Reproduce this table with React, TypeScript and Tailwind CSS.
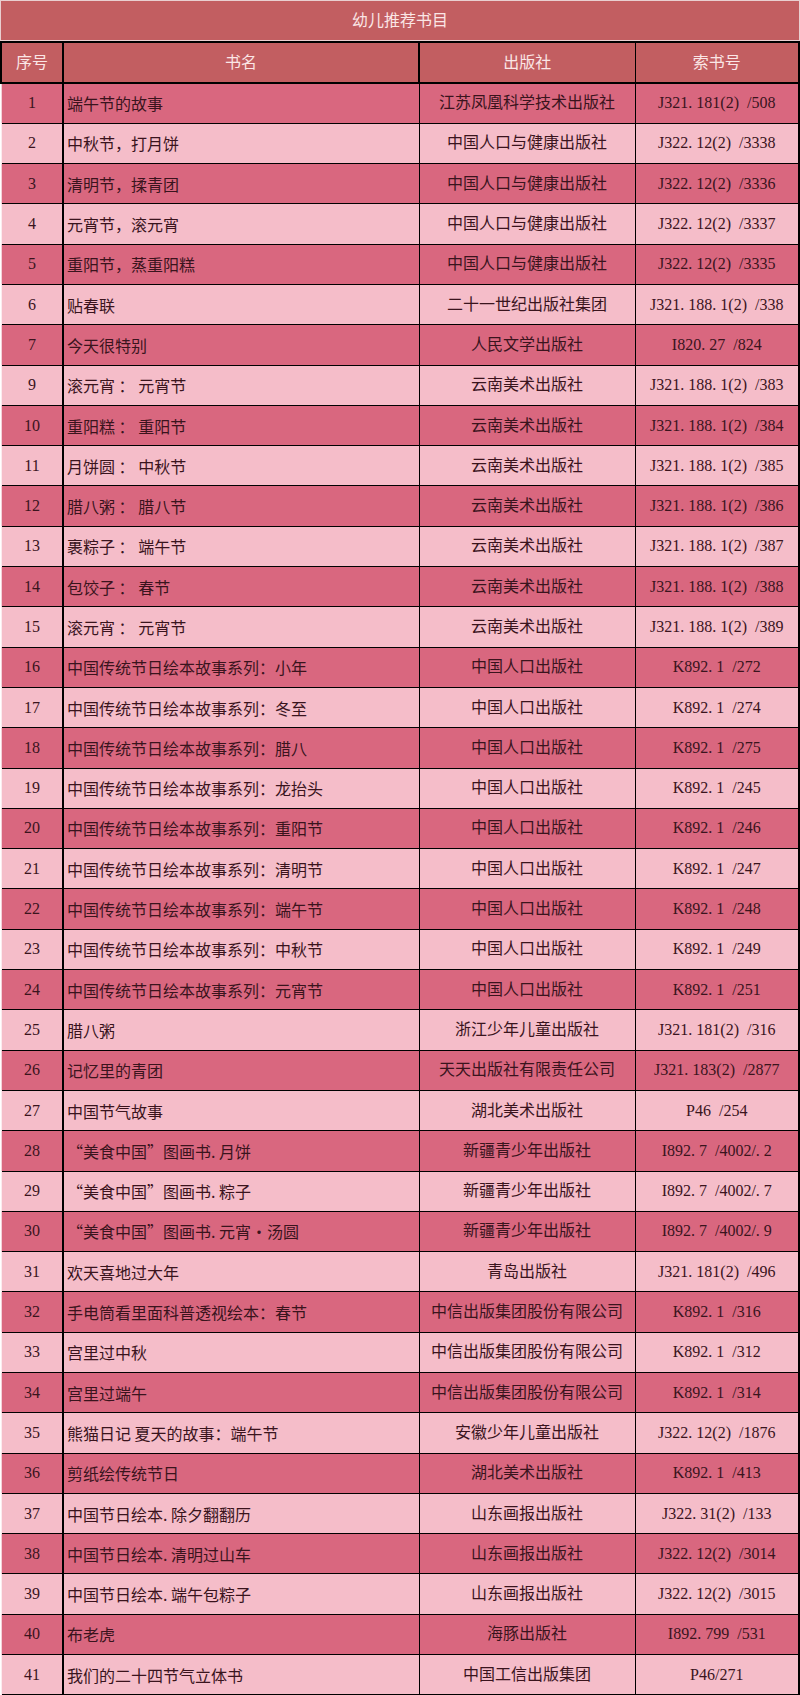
import React from 'react';

type Book = { no: string; name: string; press: string; code: string };

const BOOKS: Book[] = [
    { no: '1', name: '端午节的故事', press: '江苏凤凰科学技术出版社', code: 'J321.181(2) /508' },
    { no: '2', name: '中秋节，打月饼', press: '中国人口与健康出版社', code: 'J322.12(2) /3338' },
    { no: '3', name: '清明节，揉青团', press: '中国人口与健康出版社', code: 'J322.12(2) /3336' },
    { no: '4', name: '元宵节，滚元宵', press: '中国人口与健康出版社', code: 'J322.12(2) /3337' },
    { no: '5', name: '重阳节，蒸重阳糕', press: '中国人口与健康出版社', code: 'J322.12(2) /3335' },
    { no: '6', name: '贴春联', press: '二十一世纪出版社集团', code: 'J321.188.1(2) /338' },
    { no: '7', name: '今天很特别', press: '人民文学出版社', code: 'I820.27 /824' },
    { no: '9', name: '滚元宵 ： 元宵节', press: '云南美术出版社', code: 'J321.188.1(2) /383' },
    { no: '10', name: '重阳糕 ： 重阳节', press: '云南美术出版社', code: 'J321.188.1(2) /384' },
    { no: '11', name: '月饼圆 ： 中秋节', press: '云南美术出版社', code: 'J321.188.1(2) /385' },
    { no: '12', name: '腊八粥 ： 腊八节', press: '云南美术出版社', code: 'J321.188.1(2) /386' },
    { no: '13', name: '裹粽子 ： 端午节', press: '云南美术出版社', code: 'J321.188.1(2) /387' },
    { no: '14', name: '包饺子 ： 春节', press: '云南美术出版社', code: 'J321.188.1(2) /388' },
    { no: '15', name: '滚元宵 ： 元宵节', press: '云南美术出版社', code: 'J321.188.1(2) /389' },
    { no: '16', name: '中国传统节日绘本故事系列：小年', press: '中国人口出版社', code: 'K892.1 /272' },
    { no: '17', name: '中国传统节日绘本故事系列：冬至', press: '中国人口出版社', code: 'K892.1 /274' },
    { no: '18', name: '中国传统节日绘本故事系列：腊八', press: '中国人口出版社', code: 'K892.1 /275' },
    { no: '19', name: '中国传统节日绘本故事系列：龙抬头', press: '中国人口出版社', code: 'K892.1 /245' },
    { no: '20', name: '中国传统节日绘本故事系列：重阳节', press: '中国人口出版社', code: 'K892.1 /246' },
    { no: '21', name: '中国传统节日绘本故事系列：清明节', press: '中国人口出版社', code: 'K892.1 /247' },
    { no: '22', name: '中国传统节日绘本故事系列：端午节', press: '中国人口出版社', code: 'K892.1 /248' },
    { no: '23', name: '中国传统节日绘本故事系列：中秋节', press: '中国人口出版社', code: 'K892.1 /249' },
    { no: '24', name: '中国传统节日绘本故事系列：元宵节', press: '中国人口出版社', code: 'K892.1 /251' },
    { no: '25', name: '腊八粥', press: '浙江少年儿童出版社', code: 'J321.181(2) /316' },
    { no: '26', name: '记忆里的青团', press: '天天出版社有限责任公司', code: 'J321.183(2) /2877' },
    { no: '27', name: '中国节气故事', press: '湖北美术出版社', code: 'P46 /254' },
    { no: '28', name: '“美食中国”图画书. 月饼', press: '新疆青少年出版社', code: 'I892.7 /4002/.2' },
    { no: '29', name: '“美食中国”图画书. 粽子', press: '新疆青少年出版社', code: 'I892.7 /4002/.7' },
    { no: '30', name: '“美食中国”图画书. 元宵·汤圆', press: '新疆青少年出版社', code: 'I892.7 /4002/.9' },
    { no: '31', name: '欢天喜地过大年', press: '青岛出版社', code: 'J321.181(2) /496' },
    { no: '32', name: '手电筒看里面科普透视绘本：春节', press: '中信出版集团股份有限公司', code: 'K892.1 /316' },
    { no: '33', name: '宫里过中秋', press: '中信出版集团股份有限公司', code: 'K892.1 /312' },
    { no: '34', name: '宫里过端午', press: '中信出版集团股份有限公司', code: 'K892.1 /314' },
    { no: '35', name: '熊猫日记 夏天的故事：端午节', press: '安徽少年儿童出版社', code: 'J322.12(2) /1876' },
    { no: '36', name: '剪纸绘传统节日', press: '湖北美术出版社', code: 'K892.1 /413' },
    { no: '37', name: '中国节日绘本. 除夕翻翻历', press: '山东画报出版社', code: 'J322.31(2) /133' },
    { no: '38', name: '中国节日绘本. 清明过山车', press: '山东画报出版社', code: 'J322.12(2) /3014' },
    { no: '39', name: '中国节日绘本. 端午包粽子', press: '山东画报出版社', code: 'J322.12(2) /3015' },
    { no: '40', name: '布老虎', press: '海豚出版社', code: 'I892.799 /531' },
    { no: '41', name: '我们的二十四节气立体书', press: '中国工信出版集团', code: 'P46/271' },
];

// SimSun-style spacing: half-width cells make the dot and the slash look spaced out
const spaceCode = (code: string) => code.replace(/\.(?=\d)/g, '. ').replace(/ \//g, '  /');

const App = () => {
    return (
        <div
            className="w-[800px] h-[1695px] bg-white text-[16px] leading-none"
            style={{ fontFamily: '"Liberation Serif", "Noto Sans CJK SC", serif' }}
        >
            {/* title bar */}
            <div className="h-[41px] flex items-center justify-center bg-[#c25e61] border border-[#e9cfd0] text-[#fbe6e6]">
                幼儿推荐书目
            </div>
            <table className="w-full border-collapse table-fixed">
                <colgroup>
                    <col className="w-[62px]" />
                    <col className="w-[356px]" />
                    <col className="w-[216px]" />
                    <col />
                </colgroup>
                <thead>
                    <tr className="h-[41px] bg-[#c25e61] text-[#fbe6e6]">
                        <th className="font-normal border-2 border-black">序号</th>
                        <th className="font-normal border-2 border-black">书名</th>
                        <th className="font-normal border border-black border-y-2">出版社</th>
                        <th className="font-normal border border-black border-y-2 border-r-2">索书号</th>
                    </tr>
                </thead>
                <tbody className="text-[#3a141d]">
                    {BOOKS.map((b, i) => (
                        <tr key={b.no} className={`h-[40.3px] ${i % 2 === 0 ? 'bg-[#d9677f]' : 'bg-[#f5bdc9]'}`}>
                            <td className="text-center border border-black border-l-2 border-r-2 border-l-white/70">{b.no}</td>
                            <td
                                className="pl-[3px] border border-black border-l-2 whitespace-pre"
                                style={{ fontFamily: '"Noto Sans CJK SC", "Liberation Serif", sans-serif' }}
                            >
                                {b.name}
                            </td>
                            <td className="text-center border border-black whitespace-nowrap">{b.press}</td>
                            <td className="text-center border border-black border-r-2 whitespace-pre">{spaceCode(b.code)}</td>
                        </tr>
                    ))}
                </tbody>
            </table>
        </div>
    );
};

export default App;
